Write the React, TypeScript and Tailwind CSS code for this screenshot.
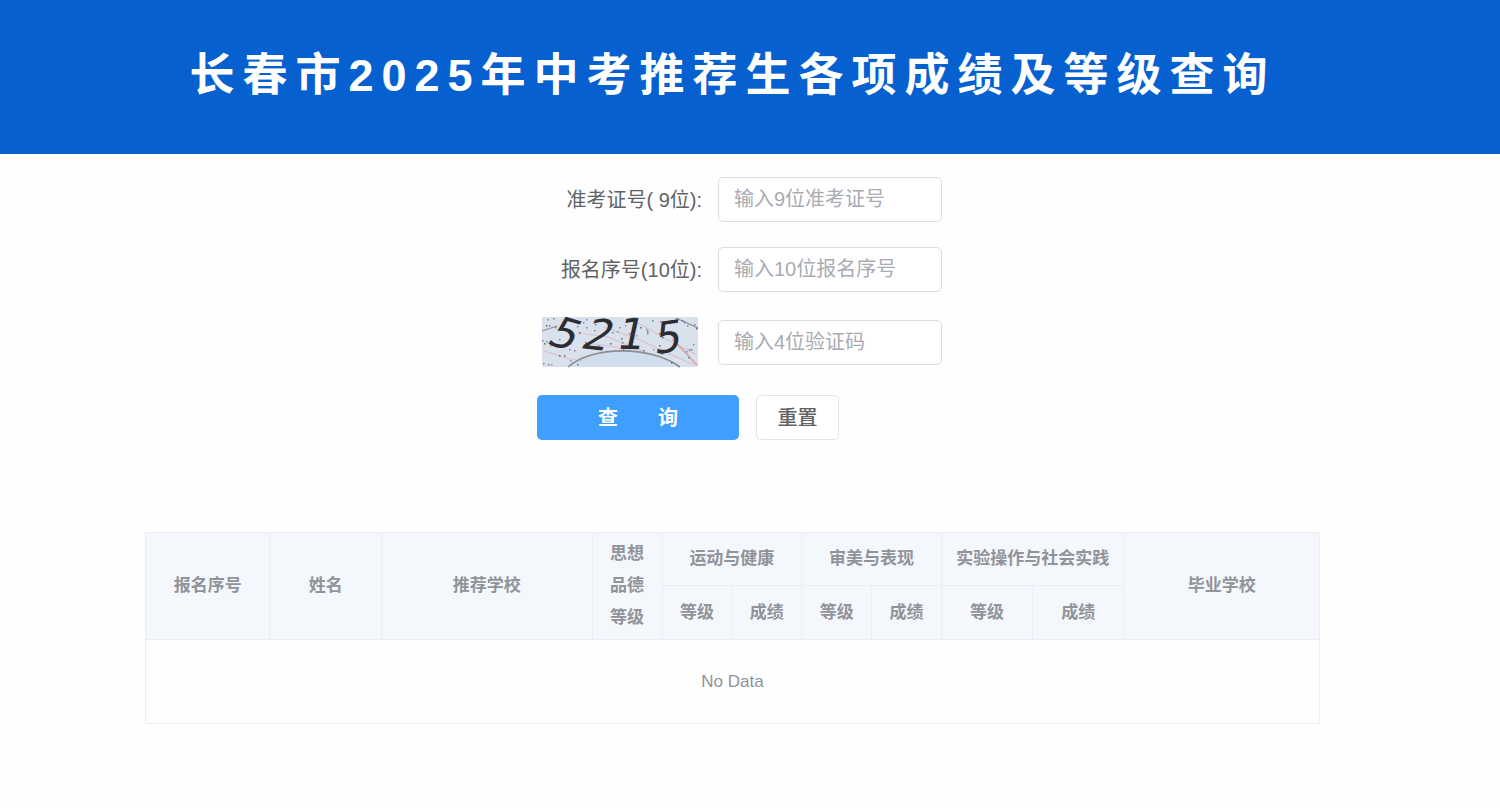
import { useState } from 'react';

const SPECK_COLORS = ['#2c2f75', '#3f5f9a', '#7d3f8f', '#2f7f6a', '#b0607a', '#303040'];

function makeSpecks(count: number) {
  let seed = 5215;
  const next = () => {
    seed = (seed * 16807) % 2147483647;
    return seed / 2147483647;
  };
  return Array.from({ length: count }, () => ({
    x: Math.round(next() * 154),
    y: Math.round(next() * 48),
    color: SPECK_COLORS[Math.floor(next() * SPECK_COLORS.length)],
  })).filter((speck) => Math.hypot((speck.x - 82) / 50, (speck.y - 56) / 24) > 1);
}

const SPECKS = makeSpecks(95);

const DIGITS = [
  { value: '5', transform: 'translate(24 17) rotate(16) skewX(-14)' },
  { value: '2', transform: 'translate(57 18) rotate(6) skewX(-18)' },
  { value: '1', transform: 'translate(90 17) rotate(2) skewX(-10)' },
  { value: '5', transform: 'translate(127 20) rotate(-8) skewX(-14)' },
];

function Captcha() {
  return (
    <svg
      viewBox="0 0 156 50"
      className="block h-[50px] w-[156px] shrink-0 overflow-visible"
      role="img"
      aria-label="验证码 5215"
    >
      <rect width="156" height="50" fill="#d9e1ec" />
      <path d="M26 50C50 29 108 28 138 50Z" fill="#d0deed" />
      <g fill="none" stroke="#dcb9c4" strokeWidth="1.2" opacity="0.8">
        <path d="M36 16L66 20L100 34" />
        <path d="M2 34L28 42L40 44" />
        <path d="M92 4L124 22L155 38" />
        <path d="M44 26L74 30L84 34" />
        <path d="M130 22L142 34L155 48" stroke="#e0a0aa" strokeWidth="2" />
        <path d="M62 10L96 22L152 48" />
      </g>
      <g fill="none" stroke="#8b8c91">
        <path d="M26 50C50 29 108 28 138 50" strokeWidth="1.6" />
        <path d="M0 14L15 9" strokeWidth="1.3" />
        <path d="M134 1L156 11" strokeWidth="1.3" />
      </g>
      {SPECKS.map((speck, index) => (
        <rect key={index} x={speck.x} y={speck.y} width="1.5" height="1.5" fill={speck.color} opacity="0.7" />
      ))}
      {DIGITS.map((digit, index) => (
        <text
          key={index}
          transform={digit.transform}
          y="15"
          textAnchor="middle"
          fontFamily="DejaVu Sans, sans-serif"
          fontSize="43"
          fill="#2b2d31"
        >
          {digit.value}
        </text>
      ))}
    </svg>
  );
}

const inputClass =
  'h-[45px] w-56 rounded-[5px] border border-[#d9dce3] bg-white px-[15px] text-xl text-[#606266] outline-none placeholder:text-[#a8abb2] focus:border-[#409eff]';
const labelClass = 'w-[165px] text-right text-xl text-[#606266]';
const cellClass = 'border-r border-b border-[#ebeef5] p-0 text-center font-bold';

const EMPTY_FORM = { ticket: '', serial: '', code: '' };

export default function App() {
  const [form, setForm] = useState(EMPTY_FORM);
  const update = (key: keyof typeof EMPTY_FORM) => (event: React.ChangeEvent<HTMLInputElement>) =>
    setForm({ ...form, [key]: event.target.value });

  return (
    <div className="min-h-screen bg-[#fefefe] font-['Liberation_Sans','Noto_Sans_CJK_SC',sans-serif]">
      <header className="bg-[#0660d0] pt-[41px] pr-[35px] pb-[43px]">
        <h1 className="text-center text-[45px] leading-[70px] font-bold tracking-[8px] text-white">
          长春市2025年中考推荐生各项成绩及等级查询
        </h1>
      </header>

      <main className="pt-[23px] pr-[35px]">
        <form
          className="mx-auto box-content flex w-[405px] flex-col pl-3.5"
          onSubmit={(event) => event.preventDefault()}
        >
          <div className="flex items-center justify-between">
            <label htmlFor="ticket" className={labelClass}>
              准考证号( 9位):
            </label>
            <input id="ticket" className={inputClass} placeholder="输入9位准考证号" value={form.ticket} onChange={update('ticket')} />
          </div>
          <div className="mt-[25px] flex items-center justify-between">
            <label htmlFor="serial" className={labelClass}>
              报名序号(10位):
            </label>
            <input id="serial" className={inputClass} placeholder="输入10位报名序号" value={form.serial} onChange={update('serial')} />
          </div>
          <div className="mt-[25px] flex items-center justify-end gap-5">
            <Captcha />
            <input aria-label="验证码" className={inputClass} placeholder="输入4位验证码" value={form.code} onChange={update('code')} />
          </div>
          <div className="mt-7 flex gap-[17px]">
            <button type="submit" className="flex h-[45px] w-[202px] items-center justify-center gap-10 rounded-[5px] bg-[#409eff] text-xl font-semibold text-white">
              <span>查</span>
              <span>询</span>
            </button>
            <button
              type="button"
              onClick={() => setForm(EMPTY_FORM)}
              className="h-[45px] w-[83px] rounded-[5px] border border-[#e2e4e8] bg-white text-xl font-medium text-[#606266]"
            >
              重置
            </button>
          </div>
        </form>

        <table className="mx-auto mt-[92px] w-[80.2%] table-fixed border-separate border-spacing-0 border-t border-l border-[#ebeef5] text-[17px] leading-8 text-[#909399]">
          <colgroup>
            <col className="w-[10.6%]" />
            <col className="w-[9.5%]" />
            <col className="w-[17.95%]" />
            <col className="w-[5.95%]" />
            <col className="w-[5.95%]" />
            <col className="w-[5.95%]" />
            <col className="w-[5.95%]" />
            <col className="w-[5.95%]" />
            <col className="w-[7.75%]" />
            <col className="w-[7.8%]" />
            <col />
          </colgroup>
          <thead className="bg-[#f4f7fb]">
            <tr className="h-[53px]">
              <th rowSpan={2} className={cellClass}>报名序号</th>
              <th rowSpan={2} className={cellClass}>姓名</th>
              <th rowSpan={2} className={cellClass}>推荐学校</th>
              <th rowSpan={2} className={cellClass}>
                思想
                <br />
                品德
                <br />
                等级
              </th>
              <th colSpan={2} className={cellClass}>运动与健康</th>
              <th colSpan={2} className={cellClass}>审美与表现</th>
              <th colSpan={2} className={cellClass}>实验操作与社会实践</th>
              <th rowSpan={2} className={cellClass}>毕业学校</th>
            </tr>
            <tr className="h-[54px]">
              <th className={cellClass}>等级</th>
              <th className={cellClass}>成绩</th>
              <th className={cellClass}>等级</th>
              <th className={cellClass}>成绩</th>
              <th className={cellClass}>等级</th>
              <th className={cellClass}>成绩</th>
            </tr>
          </thead>
          <tbody>
            <tr className="h-[84px]">
              <td colSpan={11} className="border-r border-b border-[#ebeef5] p-0 text-center">
                No Data
              </td>
            </tr>
          </tbody>
        </table>
      </main>
    </div>
  );
}
